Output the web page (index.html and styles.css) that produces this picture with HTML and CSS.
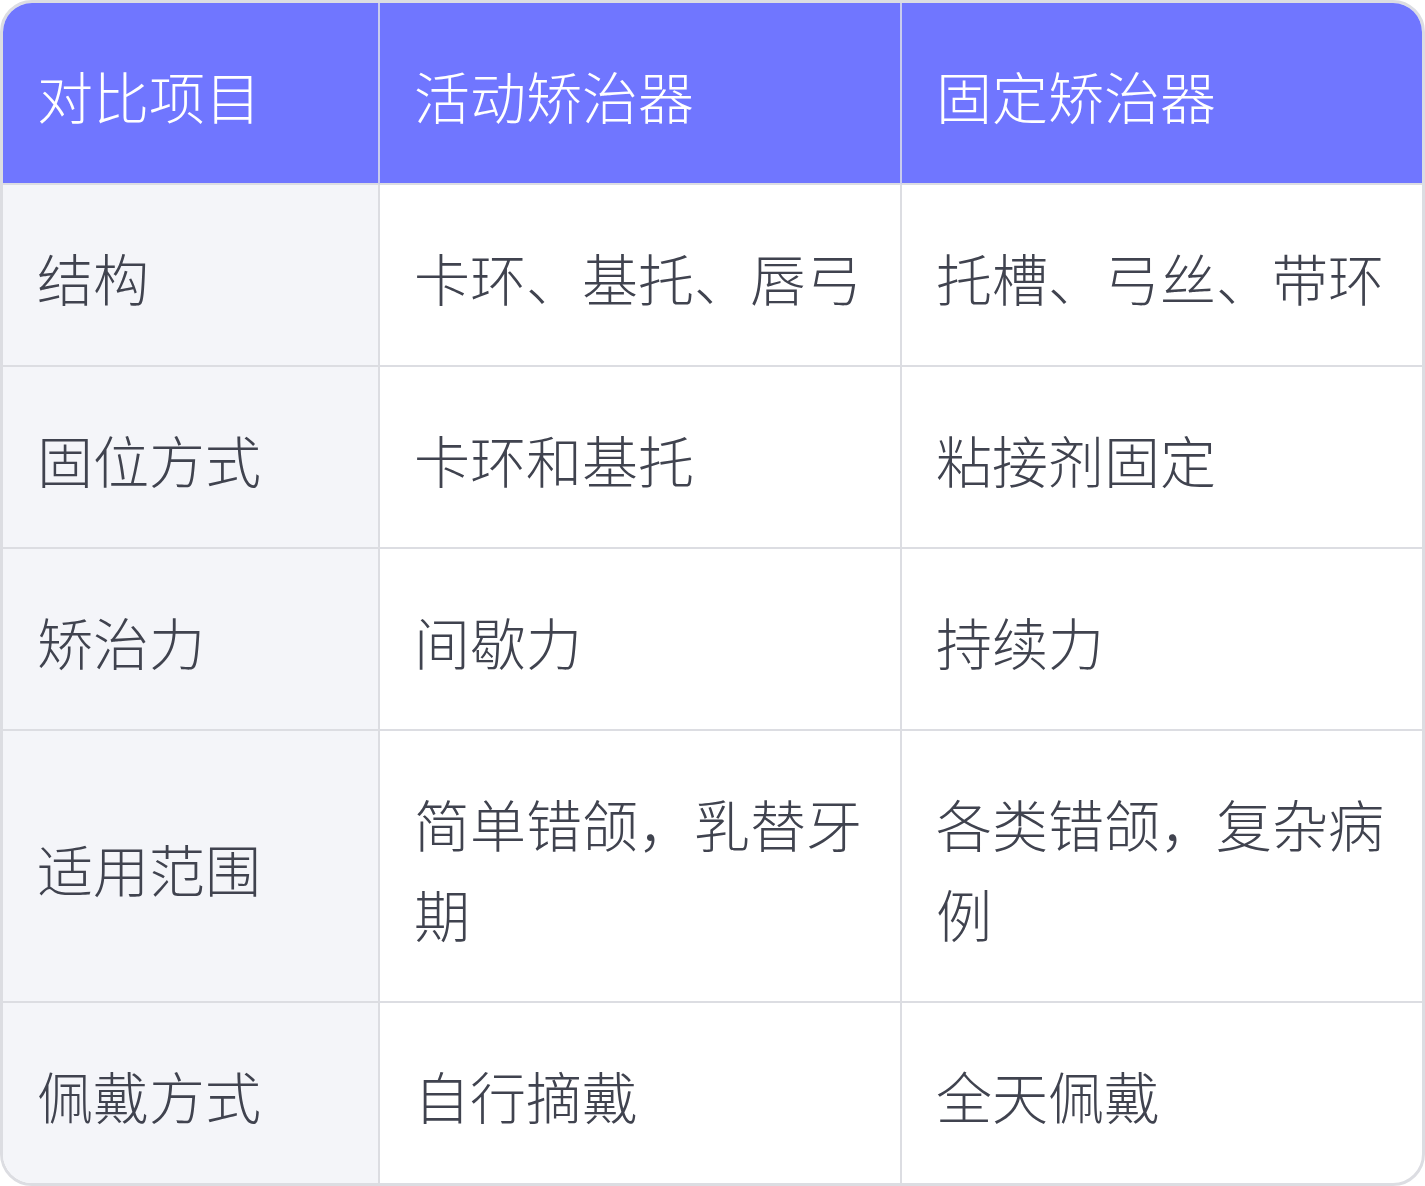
FILE: index.html
```html
<!DOCTYPE html>
<html lang="zh-CN">
<head>
<meta charset="utf-8">
<title>活动矫治器与固定矫治器对比</title>
<link rel="stylesheet" href="styles.css">
</head>
<body>
<div class="table">
  <div class="cell head">对比项目</div>
  <div class="cell head">活动矫治器</div>
  <div class="cell head last">固定矫治器</div>

  <div class="cell label">结构</div>
  <div class="cell">卡环、基托、唇弓</div>
  <div class="cell last">托槽、弓丝、带环</div>

  <div class="cell label">固位方式</div>
  <div class="cell">卡环和基托</div>
  <div class="cell last">粘接剂固定</div>

  <div class="cell label">矫治力</div>
  <div class="cell">间歇力</div>
  <div class="cell last">持续力</div>

  <div class="cell label center">适用范围</div>
  <div class="cell">简单错颌，乳替牙期</div>
  <div class="cell last">各类错颌，复杂病例</div>

  <div class="cell label bottom">佩戴方式</div>
  <div class="cell bottom">自行摘戴</div>
  <div class="cell bottom last">全天佩戴</div>
</div>
</body>
</html>
```

FILE: styles.css
```css
html, body {
  margin: 0;
  padding: 0;
  background: #ffffff;
}

.table {
  box-sizing: border-box;
  width: 1425px;
  height: 1186px;
  border: 3px solid #dcdde2;
  border-radius: 32px;
  overflow: hidden;
  display: grid;
  grid-template-columns: 377px 522px 1fr;
  background: #ffffff;
  font-family: "Noto Sans CJK SC", "Noto Sans", sans-serif;
  font-size: 56px;
  font-weight: 300;
  line-height: 90px;
  color: #40434f;
}

.cell {
  box-sizing: border-box;
  padding: 47px 32px 43px 34px;
  border-right: 2px solid #dcdde2;
  border-bottom: 2px solid #dcdde2;
  display: flex;
  align-items: center;
}

.cell.last {
  border-right: none;
}

.cell.bottom {
  border-bottom: none;
}

.head {
  background: #7076ff;
  color: #ffffff;
  border-right-color: #c9cbee;
}

.label {
  background: #f4f5f9;
}
```
